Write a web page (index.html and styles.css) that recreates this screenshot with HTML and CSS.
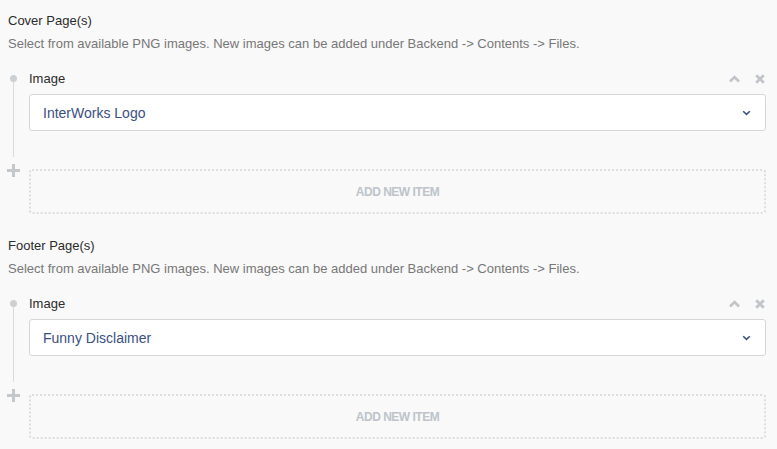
FILE: index.html
```html
<!DOCTYPE html>
<html>
<head>
<meta charset="utf-8">
<link rel="stylesheet" href="styles.css">
</head>
<body>
<div class="page">
  <section class="field">
    <div class="field-label">Cover Page(s)</div>
    <div class="field-desc">Select from available PNG images. New images can be added under Backend -&gt; Contents -&gt; Files.</div>
    <div class="repeater">
      <div class="item">
        <div class="gutter"><span class="dot"></span><span class="line"></span></div>
        <div class="item-body">
          <div class="item-head">
            <span class="item-label">Image</span>
            <span class="item-tools">
              <svg class="tool" width="11" height="8" viewBox="0 0 11 8"><path d="M1 6.5 L5.5 2 L10 6.5" fill="none" stroke="#c1c5c9" stroke-width="2.6"/></svg>
              <svg class="tool" width="10" height="10" viewBox="0 0 10 10"><path d="M1.2 1.2 L8.8 8.8 M8.8 1.2 L1.2 8.8" fill="none" stroke="#c1c5c9" stroke-width="2.8"/></svg>
            </span>
          </div>
          <div class="select">
            <span class="select-value">InterWorks Logo</span>
            <svg class="caret" width="9" height="6" viewBox="0 0 9 6"><path d="M1.2 1.2 L4.5 4.4 L7.8 1.2" fill="none" stroke="#3d5185" stroke-width="1.6"/></svg>
          </div>
        </div>
      </div>
      <div class="add-row">
        <div class="gutter"><span class="plus"></span></div>
        <div class="add-box">ADD NEW ITEM</div>
      </div>
    </div>
  </section>
  <section class="field">
    <div class="field-label">Footer Page(s)</div>
    <div class="field-desc">Select from available PNG images. New images can be added under Backend -&gt; Contents -&gt; Files.</div>
    <div class="repeater">
      <div class="item">
        <div class="gutter"><span class="dot"></span><span class="line"></span></div>
        <div class="item-body">
          <div class="item-head">
            <span class="item-label">Image</span>
            <span class="item-tools">
              <svg class="tool" width="11" height="8" viewBox="0 0 11 8"><path d="M1 6.5 L5.5 2 L10 6.5" fill="none" stroke="#c1c5c9" stroke-width="2.6"/></svg>
              <svg class="tool" width="10" height="10" viewBox="0 0 10 10"><path d="M1.2 1.2 L8.8 8.8 M8.8 1.2 L1.2 8.8" fill="none" stroke="#c1c5c9" stroke-width="2.8"/></svg>
            </span>
          </div>
          <div class="select">
            <span class="select-value">Funny Disclaimer</span>
            <svg class="caret" width="9" height="6" viewBox="0 0 9 6"><path d="M1.2 1.2 L4.5 4.4 L7.8 1.2" fill="none" stroke="#3d5185" stroke-width="1.6"/></svg>
          </div>
        </div>
      </div>
      <div class="add-row">
        <div class="gutter"><span class="plus"></span></div>
        <div class="add-box">ADD NEW ITEM</div>
      </div>
    </div>
  </section>
</div>
</body>
</html>
```
FILE: styles.css
```css
html, body {
  margin: 0;
  padding: 0;
  background: #f9f9f9;
}
body {
  font-family: "Liberation Sans", Arial, sans-serif;
  font-size: 13px;
  color: #333;
}
.page {
  padding: 0 11px 0 8px;
}
.field {
  padding: 12px 0 11px;
}
.field-label {
  line-height: 18px;
  color: #2b2b2b;
}
.field-desc {
  margin-top: 5px;
  line-height: 18px;
  color: #777;
}
.repeater {
  margin-top: 17px;
}
.item, .add-row {
  display: flex;
}
.gutter {
  width: 21px;
  flex: none;
  display: flex;
  flex-direction: column;
  align-items: flex-start;
}
.dot {
  width: 7px;
  height: 7px;
  border-radius: 50%;
  background: #ccd0d3;
  margin: 5px 0 0 2px;
}
.line {
  flex: 1;
  width: 1px;
  background: #dadada;
  margin-left: 5px;
}
.item-body {
  flex: 1;
  padding-bottom: 26px;
}
.item-head {
  display: flex;
  justify-content: space-between;
  align-items: center;
  height: 18px;
}
.item-label {
  line-height: 18px;
  color: #2b2b2b;
}
.item-tools {
  display: flex;
  align-items: center;
  gap: 15px;
  padding-right: 1px;
}
.tool {
  display: block;
}
.select {
  margin-top: 6px;
  height: 35px;
  border: 1px solid #d3d7da;
  border-radius: 3px;
  background: #fff;
  display: flex;
  align-items: center;
  justify-content: space-between;
  padding: 0 14px 0 13px;
}
.select-value {
  font-size: 14px;
  color: #3a4f82;
}
.caret {
  display: block;
  margin-top: 1px;
}
.plus {
  position: relative;
  width: 13px;
  height: 13px;
  margin: 7px 0 0 -1px;
}
.plus::before, .plus::after {
  content: "";
  position: absolute;
  background: #c4c8cc;
}
.plus::before {
  left: 0;
  top: 5px;
  width: 13px;
  height: 3px;
}
.plus::after {
  left: 5px;
  top: 0;
  width: 3px;
  height: 13px;
}
.add-box {
  flex: 1;
  margin-top: 12px;
  height: 41px;
  border: 2px dotted #dedede;
  border-radius: 3px;
  display: flex;
  align-items: center;
  justify-content: center;
  font-size: 12px;
  letter-spacing: -0.5px;
  font-weight: bold;
  color: #bdc4ca;
}
```
